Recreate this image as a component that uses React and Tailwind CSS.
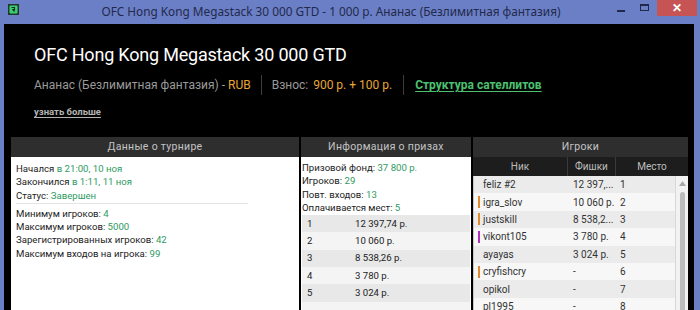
import React from 'react';

const prizes = [
  ['1', '12 397,74 р.'],
  ['2', '10 060 р.'],
  ['3', '8 538,26 р.'],
  ['4', '3 780 р.'],
  ['5', '3 024 р.'],
];

const players = [
  { nick: 'feliz #2', chips: '12 397,...', place: '1', mark: null },
  { nick: 'igra_slov', chips: '10 060 р.', place: '2', mark: '#e08a2e' },
  { nick: 'justskill', chips: '8 538,2...', place: '3', mark: '#e08a2e' },
  { nick: 'vikont105', chips: '3 780 р.', place: '4', mark: '#b030c0' },
  { nick: 'ayayas', chips: '3 024 р.', place: '5', mark: null },
  { nick: 'cryfishcry', chips: '-', place: '6', mark: '#e08a2e' },
  { nick: 'opikol', chips: '-', place: '7', mark: null },
  { nick: 'pl1995', chips: '-', place: '8', mark: null },
];

const Line = ({ label, value }) => (
  <div className="h-[13.3px] leading-[13.3px] whitespace-nowrap">
    {label} <span className="text-[#2f9a62]">{value}</span>
  </div>
);

const PanelHeader = ({ children }) => (
  <div className="h-[20px] bg-[#2e2e2e] text-[#c4c4c4] text-[10.5px] leading-[20px] text-center tracking-[0.3px]">
    {children}
  </div>
);

export default function App() {
  return (
    <div className="w-[700px] h-[310px] bg-[#6b7fc7] overflow-hidden flex flex-col font-['Roboto',sans-serif]">
      {/* window title bar */}
      <div className="h-[24px] shrink-0 flex items-start">
        <svg width="11" height="11" viewBox="0 0 11 11" className="mt-[4px] ml-[8px]">
          <rect width="11" height="11" fill="#1e3a2a" />
          <rect x="1.5" y="1.5" width="8" height="8" rx="1" fill="#3ccf74" />
          <path d="M3.5 3.5h3v2.2h-1.5l1.5 1.8" stroke="#123020" strokeWidth="1.2" fill="none" />
        </svg>
        <div className="flex-1 text-center text-[11.8px] leading-[22px] text-[#22294a] font-['Noto_Sans',sans-serif] ml-[26px]">
          OFC Hong Kong Megastack 30 000 GTD - 1 000 р. Ананас (Безлимитная фантазия)
        </div>
        <div className="w-[8px] h-[2px] bg-[#1f2848] mt-[10px] mr-[15px]" />
        <div className="w-[9px] h-[7px] border border-[#1f2848] border-t-2 mt-[4px] mr-[8px]" />
        <div className="w-[40px] h-[16px] bg-[#c75454] text-white text-[12px] leading-[16px] text-center font-bold mr-[3px]">
          ✕
        </div>
      </div>

      {/* window body */}
      <div className="flex-1 ml-[4px] mr-[6px] bg-black flex flex-col">
        <div className="px-[30px] pt-[18px]">
          <div className="text-white text-[18px] leading-[26px] whitespace-nowrap tracking-[-0.2px]">
            OFC Hong Kong Megastack 30 000 GTD
          </div>
          <div className="mt-[8px] h-[18px] flex items-center text-[12px] whitespace-nowrap text-[#9a9a9a]">
            <span>
              Ананас (Безлимитная фантазия) - <span className="text-[#e9a634]">RUB</span>
            </span>
            <span className="w-px h-[20px] bg-[#3c3c3c] mx-[10px]" />
            <span>
              Взнос: <span className="text-[#e9a634] ml-[2px]">900 р. + 100 р.</span>
            </span>
            <span className="w-px h-[20px] bg-[#3c3c3c] mx-[11px]" />
            <span className="text-[#4cc070] font-bold underline underline-offset-2">
              Структура сателлитов
            </span>
          </div>
          <div className="mt-[11px] h-[14px] leading-[14px] text-[9.5px] font-bold text-[#b4b4b4] underline underline-offset-2">
            узнать больше
          </div>
        </div>

        {/* panels */}
        <div className="mt-[18px] ml-[7px] flex gap-[2px] flex-1 text-[9.6px] text-[#222]">
          <div className="w-[288px] flex flex-col">
            <PanelHeader>Данные о турнире</PanelHeader>
            <div className="flex-1 bg-white pl-[5px] pt-[5px]">
              <Line label="Начался" value="в 21:00, 10 ноя" />
              <Line label="Закончился" value="в 1:11, 11 ноя" />
              <Line label="Статус:" value="Завершен" />
              <div className="w-[232px] h-px bg-[#e4e4e4] mt-[1px] mb-[3px]" />
              <Line label="Минимум игроков:" value="4" />
              <Line label="Максимум игроков:" value="5000" />
              <Line label="Зарегистрированных игроков:" value="42" />
              <Line label="Максимум входов на игрока:" value="99" />
            </div>
          </div>

          <div className="w-[170px] flex flex-col">
            <PanelHeader>Информация о призах</PanelHeader>
            <div className="flex-1 bg-white pl-[1px] pt-[4px]">
              <Line label="Призовой фонд:" value="37 800 р." />
              <Line label="Игроков:" value="29" />
              <Line label="Повт. входов:" value="13" />
              <Line label="Оплачивается мест:" value="5" />
              <div className="mt-[1px] mr-[1px]">
                {prizes.map(([pos, sum], i) => (
                  <div
                    key={pos}
                    className={`h-[17.3px] flex items-center ${i % 2 === 0 ? 'bg-[#e8e8e8]' : 'bg-[#f4f4f4]'}`}
                  >
                    <span className="w-[53px] pl-[5px]">{pos}</span>
                    <span>{sum}</span>
                  </div>
                ))}
                <div className="h-[17.3px] bg-[#f4f4f4]" />
              </div>
            </div>
          </div>

          <div className="w-[215px] flex flex-col">
            <PanelHeader>Игроки</PanelHeader>
            <div className="h-[19px] bg-[#1d1d1d] flex text-[#bdbdbd] text-[10px] leading-[19px]">
              <div className="w-[94px] text-center">Ник</div>
              <div className="w-[48px] text-center border-l border-[#3a3a3a]">Фишки</div>
              <div className="flex-1 text-center border-l border-[#3a3a3a]">Место</div>
            </div>
            <div className="flex-1 bg-[#f7f7f7] border-l border-[#c8c8c8] flex">
              <div className="flex-1">
                {players.map((p, i) => (
                  <div
                    key={p.nick}
                    className={`h-[17.4px] flex items-center text-[#333] text-[10px] whitespace-nowrap ${i % 2 === 0 ? 'bg-[#ebebeb]' : 'bg-[#f7f7f7]'}`}
                  >
                    <span className="w-[8px] flex justify-center pl-[1px]">
                      {p.mark && <span className="w-[2px] h-[12px]" style={{ backgroundColor: p.mark }} />}
                    </span>
                    <span className="w-[91px] pl-[1px]">{p.nick}</span>
                    <span className="w-[47px]">{p.chips}</span>
                    <span>{p.place}</span>
                  </div>
                ))}
              </div>
              <div className="w-[13px] bg-[#f2f2f2] border-l border-[#d8d8d8] flex flex-col items-center">
                <svg width="7" height="5" viewBox="0 0 7 5" className="mt-[5px]">
                  <path d="M3.5 0L7 5H0z" fill="#a8a8a8" />
                </svg>
                <div className="w-[5px] flex-1 mt-[6px] rounded-full bg-[#bcbcbc]" />
              </div>
            </div>
          </div>
        </div>
      </div>
    </div>
  );
}
